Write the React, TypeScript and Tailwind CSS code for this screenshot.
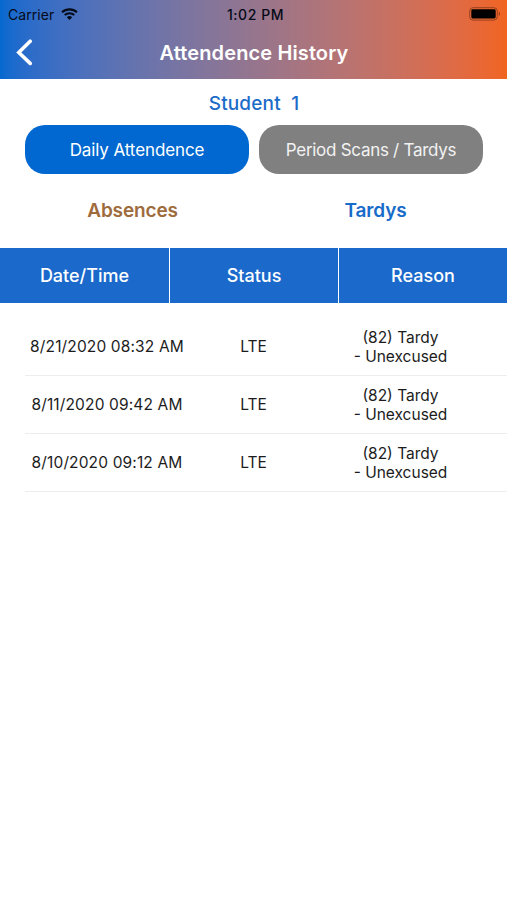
const records = [
  { date: '8/21/2020 08:32 AM', status: 'LTE', code: '(82) Tardy', note: '- Unexcused' },
  { date: '8/11/2020 09:42 AM', status: 'LTE', code: '(82) Tardy', note: '- Unexcused' },
  { date: '8/10/2020 09:12 AM', status: 'LTE', code: '(82) Tardy', note: '- Unexcused' },
];

function WifiIcon() {
  return (
    <svg width="17" height="12" viewBox="0 0 17 12" fill="none" stroke="#050a18">
      <path d="M1 4.3a11 11 0 0 1 15 0" strokeWidth="2.1" />
      <path d="M3.7 7.1a7 7 0 0 1 9.6 0" strokeWidth="2" />
      <path d="M8.5 12L5.8 9.2a4 4 0 0 1 5.4 0z" fill="#050a18" stroke="none" />
    </svg>
  );
}

function BatteryIcon() {
  return (
    <svg width="32" height="14" viewBox="0 0 32 14" fill="none">
      <rect x="0.7" y="0.7" width="27.6" height="12.4" rx="3.4" stroke="#8f3d1c" strokeWidth="0.9" />
      <rect x="2.3" y="2.3" width="24.4" height="9.2" rx="1.4" fill="#000" />
      <path d="M29.8 4.8c1.6.7 1.6 3.5 0 4.2z" fill="#8f3d1c" />
    </svg>
  );
}

function StatusBar() {
  return (
    <div className="grid h-[27px] grid-cols-[1fr_auto_1fr] items-center pr-[6px] pl-[8px] text-[14px] text-[#050a18]">
      <div className="flex items-center gap-[7px]">
        <span className="pt-px tracking-[0.05px]">Carrier</span>
        <WifiIcon />
      </div>
      <span className="pt-px pl-[2px] font-medium tracking-[0.55px]">1:02 PM</span>
      <div className="flex justify-end">
        <BatteryIcon />
      </div>
    </div>
  );
}

export default function App() {
  return (
    <div className="h-[900px] w-[507px] overflow-hidden bg-white font-['Inter','Liberation_Sans',sans-serif] whitespace-nowrap">
      <header className="h-[79px] bg-linear-to-r from-[#0469d0] to-[#f1641f]">
        <StatusBar />
        <div className="grid h-[50px] grid-cols-[1fr_auto_1fr] items-center text-white">
          <button className="pl-[16px]" aria-label="Back">
            <svg width="17" height="27" viewBox="0 0 17 27" fill="none" stroke="#fff" strokeWidth="3.6" strokeLinecap="round" strokeLinejoin="miter">
              <path d="M14.2 2.2L2.8 13.5L14.2 24.4" />
            </svg>
          </button>
          <h1 className="pt-px pl-px text-[20px] font-semibold tracking-[0.12px]">Attendence History</h1>
          <span />
        </div>
      </header>

      <h2 className="flex h-[46px] items-center justify-center pt-[4px] pl-px text-[19px] font-medium tracking-[0.15px] whitespace-pre text-[#1c6bc9]">
        Student  1
      </h2>

      <div className="flex gap-[10px] pl-[25px] text-[17px] text-white">
        <button className="h-[49px] w-[224px] rounded-[20px] bg-[#0068d0] pt-[2px] tracking-[-0.1px]">Daily Attendence</button>
        <button className="h-[49px] w-[224px] rounded-[20px] bg-[#808080] pt-[2px] tracking-[-0.28px] text-[#f2f2f2]">Period Scans / Tardys</button>
      </div>

      <div className="grid h-[74px] grid-cols-2 items-center pr-[10px] pl-[11px] text-center text-[19px] font-semibold tracking-[-0.15px]">
        <span className="text-[#9e6c3c]">Absences</span>
        <span className="text-[#176bc9]">Tardys</span>
      </div>

      <div className="grid h-[55px] grid-cols-[170px_169px_168px] bg-[#1a69cb] text-[18px] font-medium text-white">
        <div className="flex items-center justify-center border-r border-white">Date/Time</div>
        <div className="flex items-center justify-center border-r border-white">Status</div>
        <div className="flex items-center justify-center">Reason</div>
      </div>

      <div className="pt-[15px] pl-[25px] text-[15.5px] leading-[19px] text-[#1c1c1c]">
        {records.map((r) => (
          <div key={r.date} className="grid h-[58px] grid-cols-[164px_129px_1fr] items-center border-b border-[#ededed] text-center">
            <span className="tracking-[0.14px]">{r.date}</span>
            <span>{r.status}</span>
            <div className="flex flex-col pr-[24px]">
              <span>{r.code}</span>
              <span>{r.note}</span>
            </div>
          </div>
        ))}
      </div>
    </div>
  );
}
